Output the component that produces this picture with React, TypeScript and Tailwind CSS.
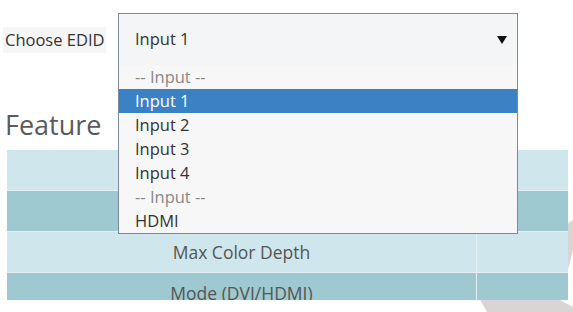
import React from "react";

// options shown in the open EDID list
const options = [
  { label: "-- Input --", group: true },
  { label: "Input 1", selected: true },
  { label: "Input 2" },
  { label: "Input 3" },
  { label: "Input 4" },
  { label: "-- Input --", group: true },
  { label: "HDMI" },
];

const rows = [
  { name: "", tone: "light" },
  { name: "", tone: "dark" },
  { name: "Max Color Depth", tone: "light" },
  { name: "Mode (DVI/HDMI)", tone: "dark" },
];

export default function App() {
  return (
    <div className="relative w-[573px] h-[312px] overflow-hidden bg-white font-['Open_Sans','Noto_Sans',sans-serif] text-[#333]">
      {/* faint watermark behind the table */}
      <svg className="absolute inset-0" width="573" height="312" viewBox="0 0 573 312">
        <polygon points="470,282 573,220 573,250 560,300 573,307 573,312 487,312" fill="#d9d5d5" />
      </svg>

      <div className="relative flex flex-col">
        <div className="flex items-center pt-[13px]">
          <div className="w-[103px] ml-[3px] pl-[2px] py-[3px] bg-[#f6f6f6] text-[16.5px] leading-[20px] text-[#333] whitespace-nowrap">
            Choose EDID
          </div>
          <div className="relative ml-[12px] w-[400px] h-[53px] border border-[#7d899b] bg-[#f4f5f6] flex items-center justify-between pl-[16px] pr-[10px] z-10">
            <span className="text-[16.5px]">Input 1</span>
            <svg width="10" height="8" viewBox="0 0 10 8">
              <polygon points="0,0 10,0 5,8" fill="#111" />
            </svg>
            <div className="absolute left-[0px] top-full -ml-px w-[400px] border border-t-0 border-[#7d899b] bg-[#f7f7f7]">
              {options.map((o, i) => (
                <div
                  key={i}
                  className={
                    o.selected
                      ? "h-[24px] leading-[24px] pl-[16px] text-[16.5px] bg-[#3b82c5] text-white"
                      : o.group
                      ? "h-[24px] leading-[24px] pl-[16px] text-[16.5px] text-[#888]"
                      : "h-[24px] leading-[24px] pl-[16px] text-[16.5px] text-[#333]"
                  }
                >
                  {o.label}
                </div>
              ))}
            </div>
          </div>
        </div>

        <h2 className="mt-[43px] ml-[5px] text-[27px] leading-[31px] text-[#5a5a5a]">Feature</h2>

        <div className="mt-[10px] ml-[7px] w-[561px] h-[150px] overflow-hidden">
          {rows.map((r, i) => (
            <div
              key={i}
              className={
                r.tone === "light"
                  ? "flex h-[41px] border-b border-[#e4f0f3] bg-[#cfe6ec]"
                  : "flex h-[41px] border-b border-[#e4f0f3] bg-[#9ec9d0]"
              }
            >
              <div className="w-[469px] flex items-center justify-center text-[17.5px] text-[#555]">{r.name}</div>
              <div className="w-px bg-[#e4f0f3]" />
              <div className="flex-1" />
            </div>
          ))}
        </div>
      </div>
    </div>
  );
}
